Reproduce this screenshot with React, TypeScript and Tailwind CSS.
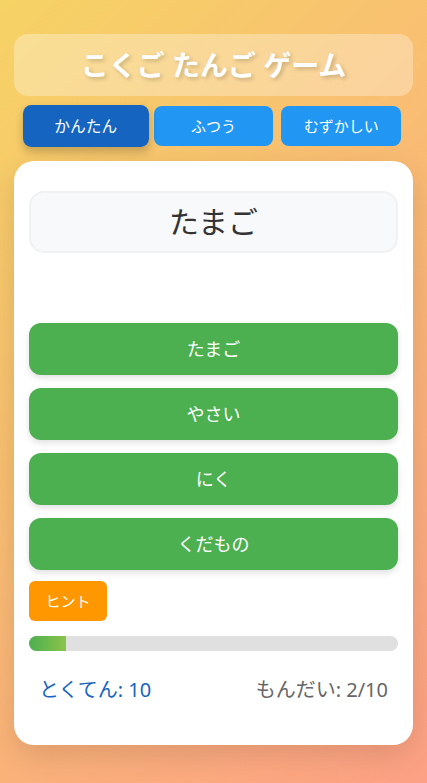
import { useState } from "react";

const levels = ["かんたん", "ふつう", "むずかしい"];
const choices = ["たまご", "やさい", "にく", "くだもの"];

export default function App() {
  const [level, setLevel] = useState(0);

  return (
    <div
      className="min-h-[783px] w-full bg-[linear-gradient(135deg,#f6d365_0%,#fda085_100%)] px-[14px] pt-[34px] pb-[38px]"
      style={{ fontFamily: '"Noto Sans", "Noto Sans CJK JP", sans-serif' }}
    >
      <div className="flex h-[62px] items-center justify-center rounded-[14px] bg-white/30">
        <h1 className="text-[28px] font-bold leading-none text-white [text-shadow:2px_2px_4px_rgba(0,0,0,0.2)]">
          こくご たんご ゲーム
        </h1>
      </div>

      <div className="mt-[10px] flex gap-2 px-3">
        {levels.map((name, i) => (
          <button
            key={name}
            onClick={() => setLevel(i)}
            className={
              i === level
                ? "h-10 flex-1 scale-105 rounded-lg bg-[#1565c0] text-[15px] text-white shadow-[0_4px_8px_rgba(0,0,0,0.2)]"
                : "h-10 flex-1 rounded-lg bg-[#2196f3] text-[15px] text-white"
            }
          >
            {name}
          </button>
        ))}
      </div>

      <div className="mt-[15px] rounded-[20px] bg-white px-[15px] pt-[30px] pb-[30px] shadow-[0_10px_30px_rgba(0,0,0,0.12)]">
        <div className="flex h-[62px] items-center justify-center rounded-[15px] border-2 border-[#f0f1f3] bg-[#f8f9fa]">
          <span className="text-[30px] leading-none text-[#333]">たまご</span>
        </div>

        <div className="h-[70px]" />

        <div className="flex flex-col gap-[13px]">
          {choices.map((c) => (
            <button
              key={c}
              className="h-[52px] w-full rounded-xl bg-[#4caf50] text-[18px] text-white shadow-[0_3px_6px_rgba(0,0,0,0.12)]"
            >
              {c}
            </button>
          ))}
        </div>

        <button className="mt-[11px] h-10 w-[78px] rounded-md bg-[#ff9800] text-[15px] text-white">
          ヒント
        </button>

        <div className="mt-[15px] h-[15px] w-full overflow-hidden rounded-full bg-[#e0e0e0]">
          <div
            className="h-full bg-[linear-gradient(90deg,#4caf50,#8bc34a)]"
            style={{ width: "10%" }}
          />
        </div>

        <div className="mt-[14px] flex items-center justify-between px-[10px] py-[10px] text-[20px] leading-[30px]">
          <span className="text-[#1565c0]">とくてん: 10</span>
          <span className="text-[#666]">もんだい: 2/10</span>
        </div>
      </div>
    </div>
  );
}
